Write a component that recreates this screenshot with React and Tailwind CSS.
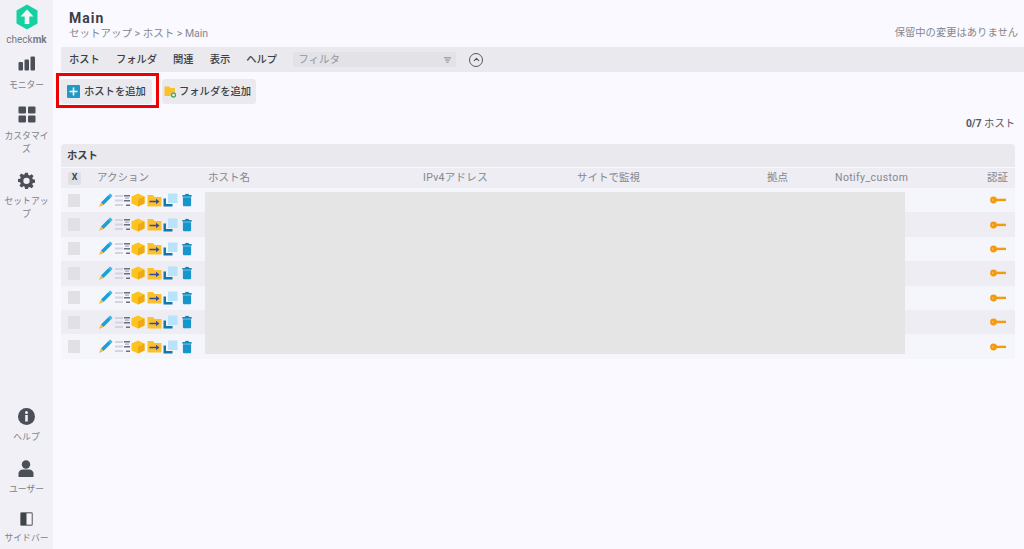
import React from 'react';
import { ChevronUp } from 'lucide-react';

const font = { fontFamily: 'Roboto, "Noto Sans CJK JP", sans-serif' };

const Logo = () => (
  <svg width="22" height="26" viewBox="0 0 22 26">
    <path d="M11 0.500 L21.500 6.500 V19.500 L11 25.500 L0.500 19.500 V6.500 Z" fill="#15d1a0" />
    <path d="M11 5.500 L17.500 12.500 H13.300 V20 H8.700 V12.500 H4.500 Z" fill="#f4f4f8" />
  </svg>
);

const MonitorIcon = () => (
  <svg width="17" height="15" viewBox="0 0 17 15" fill="#4b5058">
    <rect x="0.500" y="6" width="4.500" height="8.500" rx="1" />
    <rect x="6.500" y="3.500" width="4.500" height="11" rx="1" />
    <rect x="12.500" y="0.500" width="4.500" height="14" rx="1" />
  </svg>
);

const GridIcon = () => (
  <svg width="18" height="17" viewBox="0 0 18 17" fill="#4b5058">
    <rect x="0.500" y="0.500" width="7.500" height="7" rx="1" />
    <rect x="10" y="0.500" width="7.500" height="7" rx="1" />
    <rect x="0.500" y="9.500" width="7.500" height="7" rx="1" />
    <rect x="10" y="9.500" width="7.500" height="7" rx="1" />
  </svg>
);

const GearIcon = () => (
  <svg width="17" height="17" viewBox="0 0 24 24" fill="#4b5058">
    <path fillRule="evenodd" d="M10 1h4l.6 3.100 1.900.8L19.200 3 22 5.800l-1.900 2.700.8 1.900L24 11v4l-3.100.6-.8 1.900 1.900 2.700-2.800 2.800-2.700-1.900-1.900.8L14 24h-4l-.6-3.100-1.900-.8L4.800 22 2 19.200l1.900-2.700-.8-1.900L0 14v-4l3.100-.6.8-1.900L2 4.800 4.800 2l2.700 1.900 1.900-.8zM12 8a4.500 4.500 0 1 0 0 9 4.500 4.500 0 0 0 0-9z" />
  </svg>
);

const InfoIcon = () => (
  <svg width="17" height="17" viewBox="0 0 17 17">
    <circle cx="8.500" cy="8.500" r="8.500" fill="#4b5058" />
    <circle cx="8.500" cy="4.500" r="1.500" fill="#f0f0f6" />
    <rect x="7.200" y="7" width="2.600" height="6.500" fill="#f0f0f6" />
  </svg>
);

const UserIcon = () => (
  <svg width="16" height="17" viewBox="0 0 16 17" fill="#4b5058">
    <circle cx="8" cy="4.500" r="4.200" />
    <path d="M0.500 17 V13.500 C0.500 11 3 9.500 5 9.500 H11 C13 9.500 15.500 11 15.500 13.500 V17 Z" />
  </svg>
);

const SidebarIcon = () => (
  <svg width="13" height="14" viewBox="0 0 13 14">
    <rect x="0.700" y="0.700" width="11.600" height="12.600" rx="1" fill="#f4f4f8" stroke="#7d8188" strokeWidth="1.400" />
    <rect x="1" y="1" width="5.500" height="12" fill="#3f444b" />
  </svg>
);

const Pencil = () => (
  <svg width="15" height="15" viewBox="0 0 15 15">
    <path d="M3 9.500 L10.500 2 L13 4.500 L5.500 12 Z" fill="#1a9fd6" />
    <path d="M10.500 2 L11.700 0.800 Q12.300 0.400 12.800 0.900 L14.100 2.200 Q14.600 2.700 14.200 3.300 L13 4.500 Z" fill="#3fb6e6" />
    <path d="M3 9.500 L5.500 12 L1 14 Z" fill="#f3b53a" />
  </svg>
);

const Rules = () => (
  <svg width="15" height="13" viewBox="0 0 15 13">
    <rect x="0" y="1" width="8" height="2" fill="#d3d3e2" />
    <rect x="0" y="5.500" width="8" height="2" fill="#d3d3e2" />
    <rect x="0" y="10" width="8" height="2" fill="#d3d3e2" />
    <rect x="9" y="1" width="6" height="1.500" fill="#6b6e80" />
    <rect x="9" y="6" width="6" height="1.500" fill="#6b6e80" />
    <rect x="11" y="10.500" width="4" height="1.500" fill="#6b6e80" />
    <rect x="10" y="3.500" width="4" height="1.200" fill="#a5a7b6" />
  </svg>
);

const Box = () => (
  <svg width="14" height="14" viewBox="0 0 14 14">
    <path d="M7 0.500 L13.500 3.500 V10.500 L7 13.500 L0.500 10.500 V3.500 Z" fill="#fdc41f" />
    <path d="M7 6.500 L13.500 3.500 V10.500 L7 13.500 Z" fill="#eeaa10" />
  </svg>
);

const FolderMove = () => (
  <svg width="15" height="13" viewBox="0 0 15 13">
    <path d="M0.500 1 H6 L7.500 3 H14.500 V12.500 H0.500 Z" fill="#fbc12c" />
    <path d="M2.500 6.700 H9 V4.800 L12.500 7.500 L9 10.200 V8.300 H2.500 Z" fill="#3c4a9c" />
  </svg>
);

const Clone = () => (
  <svg width="15" height="14" viewBox="0 0 15 14">
    <rect x="5" y="0.500" width="9.500" height="9.500" fill="#b7e3fb" />
    <path d="M0.500 5.500 H3 V11 H9.500 V13.500 H0.500 Z" fill="#1177ad" />
  </svg>
);

const Trash = () => (
  <svg width="10" height="14" viewBox="0 0 11 14">
    <rect x="3.500" y="0.300" width="4" height="1.500" fill="#1389bb" />
    <rect x="0.300" y="1.500" width="10.400" height="2" rx="0.500" fill="#1389bb" />
    <path d="M1 4 H10 V12.500 Q10 13.800 8.800 13.800 H2.200 Q1 13.800 1 12.500 Z" fill="#1796cc" />
  </svg>
);

const Key = () => (
  <svg width="16" height="8" viewBox="0 0 16 8">
    <circle cx="3.500" cy="4" r="3.400" fill="#f59a0c" />
    <circle cx="2.800" cy="4" r="0.700" fill="#fbd48f" />
    <rect x="6" y="2.700" width="10" height="2.400" fill="#f59a0c" />
  </svg>
);

const NavItem = ({ icon, label, className = '', labelClass = 'mt-[6px]' }) => (
  <div className={`flex flex-col items-center ${className}`}>
    {icon}
    <div className={`w-full text-center text-[8.800px] leading-[13px] text-[#7c7f87] ${labelClass}`}>{label}</div>
  </div>
);

const App = () => {
  const rows = [0, 1, 2, 3, 4, 5, 6];

  return (
    <div className="flex h-[549px] w-[1024px] overflow-hidden bg-[#f9f9ff] text-[#4b4d55]" style={font}>
      <aside className="flex w-[53px] shrink-0 flex-col items-center bg-[#f0f0f6]">
        <div className="mt-[4px] flex flex-col items-center">
          <Logo />
          <div className="mt-[4px] text-[10px] leading-[12px] text-[#777a82]">check<span className="font-bold">mk</span></div>
        </div>
        <NavItem className="mt-[10px]" labelClass="mt-[8px]" icon={<MonitorIcon />} label="モニター" />
        <NavItem className="mt-[14px]" labelClass="mt-[7px]" icon={<GridIcon />} label={<>カスタマイ<br />ズ</>} />
        <NavItem className="mt-[16px]" icon={<GearIcon />} label={<>セットアッ<br />プ</>} />
        <div className="flex-1" />
        <NavItem icon={<InfoIcon />} label="ヘルプ" />
        <NavItem className="mt-[16px]" icon={<UserIcon />} label="ユーザー" />
        <NavItem className="mt-[16px] mb-[4px]" icon={<SidebarIcon />} label="サイドバー" />
      </aside>

      <main className="relative flex min-w-0 flex-1 flex-col pl-[8px]">
        <header className="flex h-[47px] items-end justify-between pb-[6px] pl-[8px] pr-[6px]">
          <div>
            <h1 className="text-[14px] font-bold leading-[18px] tracking-[1px] text-[#3c3e45]">Main</h1>
            <div className="text-[10.500px] leading-[14px] text-[#85878e]">セットアップ &gt; ホスト &gt; Main</div>
          </div>
          <div className="mb-[1px] text-[10.300px] leading-[14px] text-[#85878e]">保留中の変更はありません</div>
        </header>

        <nav className="flex h-[25px] items-center bg-[#e9e9ee] pl-[8px] text-[10.300px] font-medium text-[#3c3e45]">
          <span>ホスト</span>
          <span className="ml-[16px]">フォルダ</span>
          <span className="ml-[16px]">関連</span>
          <span className="ml-[16px]">表示</span>
          <span className="ml-[16px]">ヘルプ</span>
          <div className="ml-[16px] flex h-[15px] w-[163px] items-center justify-between bg-[#e2e2e7] pl-[5px] pr-[5px] text-[10.500px] font-normal text-[#94969c]">
            フィルタ
            <svg width="7" height="6" viewBox="0 0 9 7" fill="#8d8f95">
              <rect x="0" y="0" width="9" height="1.400" />
              <rect x="1.500" y="2.800" width="6" height="1.400" />
              <rect x="3" y="5.500" width="3" height="1.400" />
            </svg>
          </div>
          <div className="ml-[13px] flex h-[14px] w-[14px] items-center justify-center rounded-full border-[1.500px] border-[#55575e]">
            <ChevronUp size={9} strokeWidth={3} color="#55575e" />
          </div>
        </nav>

        <div className="mt-[7px] flex gap-[10px]">
          <button className="flex h-[25px] w-[91px] items-center rounded-[3px] bg-[#e9e9ee] pl-[6px] text-[10.300px] font-medium text-[#3c3e45]">
            <span className="flex h-[13px] w-[13px] items-center justify-center rounded-[1px] bg-[#2299c4]">
              <svg width="9" height="9" viewBox="0 0 9 9" fill="#e8f6fb">
                <rect x="3.700" y="0.500" width="1.600" height="8" />
                <rect x="0.500" y="3.700" width="8" height="1.600" />
              </svg>
            </span>
            <span className="ml-[4px]">ホストを追加</span>
          </button>
          <button className="flex h-[25px] w-[94px] items-center rounded-[3px] bg-[#e9e9ee] pl-[2px] text-[10.300px] font-medium text-[#3c3e45]">
            <svg width="13" height="13" viewBox="0 0 13 13">
              <path d="M0.500 1.500 H5 L6.500 3 H11 V11 H0.500 Z" fill="#fbc12c" />
              <circle cx="9.500" cy="10" r="2.800" fill="#f4f4f8" />
              <circle cx="9.500" cy="10" r="2" fill="none" stroke="#45a85a" strokeWidth="1.300" />
            </svg>
            <span className="ml-[2px]">フォルダを追加</span>
          </button>
        </div>

        <div className="mt-[13px] h-[14px] pr-[9px] text-right text-[10.300px] leading-[14px] text-[#55575e]">
          <span className="font-bold">0/7</span> ホスト
        </div>

        <section className="relative mr-[9px] mt-[13px]">
          <div className="flex h-[23px] items-center rounded-t-[4px] bg-[#e9e9ee] pl-[6px] text-[10.300px] font-bold text-[#3c3e45]">ホスト</div>
          <div className="mt-[1px] grid h-[20px] grid-cols-[30px_117px_215px_154px_190px_68px_1fr_auto] items-center bg-[#ededf3] pr-[7px] text-[10.500px] text-[#85878e]">
            <span className="ml-[7px] flex h-[13px] w-[13px] items-center justify-center rounded-[2px] bg-[#dfdfe5] text-[9px] font-bold text-[#44464d]">X</span>
            <span className="ml-[6px]">アクション</span>
            <span>ホスト名</span>
            <span className="tracking-[0.3px]">IPv4アドレス</span>
            <span>サイトで監視</span>
            <span>拠点</span>
            <span className="tracking-[0.400px]">Notify_custom</span>
            <span>認証</span>
          </div>
          {rows.map((row) => (
            <div key={row} className={`flex h-[24.400px] items-center justify-between pr-[9px] ${row % 2 === 1 ? 'bg-[#ededf3]' : 'bg-[#f5f5fc]'}`}>
              <div className="flex items-center">
                <span className="ml-[7px] h-[13px] w-[12px] bg-[#e1e1e5]" />
                <div className="ml-[18px] flex items-center gap-[1.500px]">
                  <Pencil />
                  <Rules />
                  <Box />
                  <FolderMove />
                  <Clone />
                  <span className="ml-[2px] flex"><Trash /></span>
                </div>
              </div>
              <Key />
            </div>
          ))}
          {/* redacted host data */}
          <div className="absolute left-[144px] top-[48px] h-[162px] w-[700px] bg-[#e5e5e5]" />
        </section>

        {/* highlight around the add host button */}
        <div className="absolute left-[3px] top-[73px] h-[35px] w-[103px] border-[3px] border-[#ee0000]" />
      </main>
    </div>
  );
};

export default App;
